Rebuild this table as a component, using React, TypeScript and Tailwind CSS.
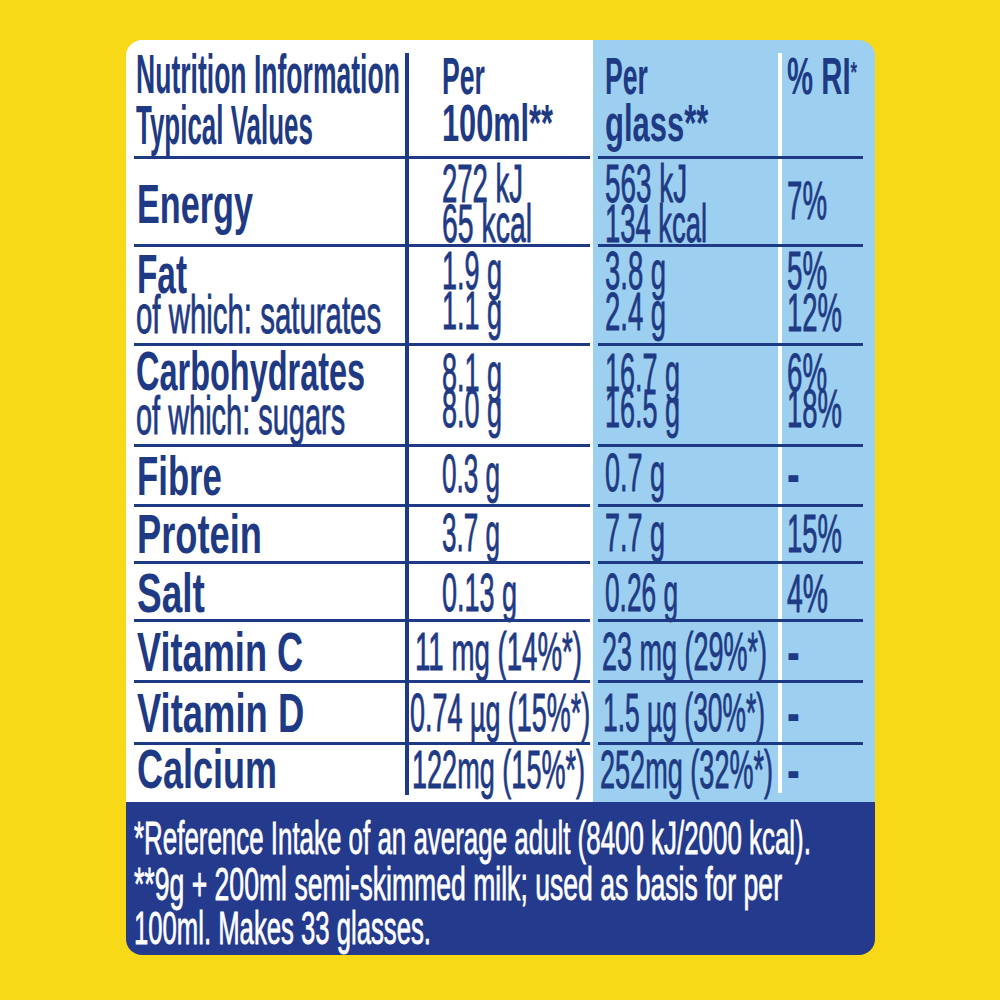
import React, { useLayoutEffect, useRef, useState } from "react";

const V = {
  lab: "text-[56px] leading-[41px] font-bold",
  val: "text-[54px] leading-[40px] font-normal [-webkit-text-stroke:0.9px_currentColor]",
  hdr: "text-[52px] leading-[38px] font-bold",
  foot: "text-[46px] leading-[34px] font-normal [-webkit-text-stroke:0.8px_currentColor]",
};

function Fit({ v, w, children }: { v: string; w: number; children: React.ReactNode }) {
  const ref = useRef<HTMLSpanElement>(null);
  const [s, setS] = useState(1);
  useLayoutEffect(() => {
    const m = () => {
      const el = ref.current;
      if (el && el.offsetWidth) setS(w / el.offsetWidth);
    };
    m();
    if (document.fonts) document.fonts.ready.then(m);
  }, [w]);
  return (
    <span
      ref={ref}
      className={`block shrink-0 whitespace-nowrap origin-left ${v}`}
      style={{ transform: `scaleX(${s})` }}
    >
      {children}
    </span>
  );
}

function Ln({ v, w, m = "", children }: { v: string; w: number; m?: string; children: React.ReactNode }) {
  return (
    <div className={`flex ${m}`}>
      <Fit v={v} w={w}>
        {children}
      </Fit>
    </div>
  );
}

type RowProps = {
  h: string;
  c1?: React.ReactNode;
  c3?: React.ReactNode;
  c4?: React.ReactNode;
  c6?: React.ReactNode;
  p1?: string;
  p3?: string;
  p4?: string;
  p6?: string;
  v2?: React.ReactNode;
  v5?: React.ReactNode;
};

function Row({ h, c1, c3, c4, c6, p1 = "pl-[11px]", p3 = "pl-[33px]", p4 = "pl-[12px]", p6 = "pl-[5px]", v2, v5 }: RowProps) {
  return (
    <div className={`grid grid-cols-[279px_4px_184px_185px_4px_93px] ${h}`}>
      <div className={`flex flex-col bg-white ${p1}`}>{c1}</div>
      {v2 ?? <div className="bg-[#1f3a84]" />}
      <div className={`flex flex-col bg-white ${p3}`}>{c3}</div>
      <div className={`flex flex-col bg-[#9dd0f0] ${p4}`}>{c4}</div>
      {v5 ?? <div className="bg-white" />}
      <div className={`flex flex-col bg-[#9dd0f0] ${p6}`}>{c6}</div>
    </div>
  );
}

function Sep() {
  return (
    <div className="grid h-[3px] grid-cols-[279px_4px_184px_185px_4px_93px]">
      <div className="bg-white">
        <div className="ml-[8px] h-full bg-[#1f3a84]" />
      </div>
      <div className="bg-[#1f3a84]" />
      <div className="bg-white">
        <div className="h-full w-[181px] bg-[#1f3a84]" />
      </div>
      <div className="bg-[#9dd0f0]">
        <div className="ml-[5px] h-full bg-[#1f3a84]" />
      </div>
      <div className="bg-[#1f3a84]" />
      <div className="bg-[#9dd0f0]">
        <div className="h-full w-[81px] bg-[#1f3a84]" />
      </div>
    </div>
  );
}

export default function App() {
  return (
    <div className="h-[1000px] w-[1000px] bg-[#f7d917] pl-[126px] pt-[40px] font-['Liberation_Sans',Arial,sans-serif] text-[#1f3a84]">
      <div className="flex h-[915px] w-[749px] flex-col overflow-hidden rounded-[16px]">
        {/* Header */}
        <Row
          h="h-[116px]"
          v2={
            <div className="flex flex-col bg-white">
              <div className="mt-[13px] flex-1 bg-[#1f3a84]" />
            </div>
          }
          v5={
            <div className="flex flex-col bg-[#9dd0f0]">
              <div className="mt-[13px] flex-1 bg-white" />
            </div>
          }
          p1="pl-[10px]"
          c1={
            <>
              <Ln v={V.lab} w={264} m="mt-[13px]">Nutrition Information</Ln>
              <Ln v={V.lab} w={177} m="mt-[10px]">Typical Values</Ln>
            </>
          }
          c3={
            <>
              <Ln v={V.hdr} w={43} m="mt-[17px]">Per</Ln>
              <Ln v={V.hdr} w={111} m="mt-[9px]">100ml**</Ln>
            </>
          }
          c4={
            <>
              <Ln v={V.hdr} w={43} m="mt-[17px]">Per</Ln>
              <Ln v={V.hdr} w={103} m="mt-[9px]">glass**</Ln>
            </>
          }
          c6={
            <Ln v={V.hdr} w={70} m="mt-[17px]">
              % RI<span className="align-top text-[30px] leading-[30px]">*</span>
            </Ln>
          }
        />
        <Sep />
        {/* Energy */}
        <Row
          h="h-[85px]"
          c1={<Ln v={V.lab} w={116} m="mt-[24px]">Energy</Ln>}
          c3={
            <>
              <Ln v={V.val} w={81} m="mt-[4px]">272 kJ</Ln>
              <Ln v={V.val} w={90}>65 kcal</Ln>
            </>
          }
          c4={
            <>
              <Ln v={V.val} w={82} m="mt-[4px]">563 kJ</Ln>
              <Ln v={V.val} w={102}>134 kcal</Ln>
            </>
          }
          c6={<Ln v={V.val} w={40} m="mt-[21px]">7%</Ln>}
        />
        <Sep />
        {/* Fat */}
        <Row
          h="h-[96px]"
          c1={
            <>
              <Ln v={V.lab} w={50} m="mt-[6px]">Fat</Ln>
              <Ln v={V.val} w={245} m="-ml-[1px]">of which: saturates</Ln>
            </>
          }
          c3={
            <>
              <Ln v={V.val} w={60} m="mt-[3px]">1.9 g</Ln>
              <Ln v={V.val} w={60}>1.1 g</Ln>
            </>
          }
          c4={
            <>
              <Ln v={V.val} w={61} m="mt-[3px]">3.8 g</Ln>
              <Ln v={V.val} w={61} m="mt-[1px]">2.4 g</Ln>
            </>
          }
          c6={
            <>
              <Ln v={V.val} w={40} m="mt-[3px]">5%</Ln>
              <Ln v={V.val} w={55} m="mt-[2px]">12%</Ln>
            </>
          }
        />
        <Sep />
        {/* Carbohydrates */}
        <Row
          h="h-[98px]"
          c1={
            <>
              <Ln v={V.lab} w={229} m="mt-[4px] -ml-[1px]">Carbohydrates</Ln>
              <Ln v={V.val} w={209} m="mt-[4px] -ml-[1px]">of which: sugars</Ln>
            </>
          }
          c3={
            <>
              <Ln v={V.val} w={60} m="mt-[6px]">8.1 g</Ln>
              <Ln v={V.val} w={60} m="-mt-[4px]">8.0 g</Ln>
            </>
          }
          c4={
            <>
              <Ln v={V.val} w={75} m="mt-[6px]">16.7 g</Ln>
              <Ln v={V.val} w={75} m="-mt-[4px]">16.5 g</Ln>
            </>
          }
          c6={
            <>
              <Ln v={V.val} w={40} m="mt-[6px]">6%</Ln>
              <Ln v={V.val} w={55} m="-mt-[4px]">18%</Ln>
            </>
          }
        />
        <Sep />
        {/* Fibre */}
        <Row
          h="h-[57px]"
          c1={<Ln v={V.lab} w={85} m="mt-[8px]">Fibre</Ln>}
          c3={<Ln v={V.val} w={58} m="mt-[6px]">0.3 g</Ln>}
          c4={<Ln v={V.val} w={60} m="mt-[5px]">0.7 g</Ln>}
          c6={<Ln v={V.lab} w={13} m="mt-[6px]">-</Ln>}
        />
        <Sep />
        {/* Protein */}
        <Row
          h="h-[54px]"
          c1={<Ln v={V.lab} w={125} m="mt-[6px]">Protein</Ln>}
          c3={<Ln v={V.val} w={58} m="mt-[5px]">3.7 g</Ln>}
          c4={<Ln v={V.val} w={60} m="mt-[5px]">7.7 g</Ln>}
          c6={<Ln v={V.val} w={55} m="mt-[6px]">15%</Ln>}
        />
        <Sep />
        {/* Salt */}
        <Row
          h="h-[55px]"
          c1={<Ln v={V.lab} w={68} m="mt-[8px]">Salt</Ln>}
          c3={<Ln v={V.val} w={75} m="mt-[8px]">0.13 g</Ln>}
          c4={<Ln v={V.val} w={73} m="mt-[8px]">0.26 g</Ln>}
          c6={<Ln v={V.val} w={41} m="mt-[9px]">4%</Ln>}
        />
        <Sep />
        {/* Vitamin C */}
        <Row
          h="h-[58px]"
          p3="pl-[6px]"
          p4="pl-[9px]"
          c1={<Ln v={V.lab} w={166} m="mt-[9px]">Vitamin C</Ln>}
          c3={<Ln v={V.val} w={167} m="mt-[9px]">11 mg (14%*)</Ln>}
          c4={<Ln v={V.val} w={165} m="mt-[9px]">23 mg (29%*)</Ln>}
          c6={<Ln v={V.lab} w={13} m="mt-[9px]">-</Ln>}
        />
        <Sep />
        {/* Vitamin D */}
        <Row
          h="h-[59px]"
          p3="pl-[1px]"
          p4="pl-[10px]"
          c1={<Ln v={V.lab} w={167} m="mt-[9px]">Vitamin D</Ln>}
          c3={<Ln v={V.val} w={180} m="mt-[9px]">0.74 µg (15%*)</Ln>}
          c4={<Ln v={V.val} w={162} m="mt-[9px]">1.5 µg (30%*)</Ln>}
          c6={<Ln v={V.lab} w={13} m="mt-[9px]">-</Ln>}
        />
        <Sep />
        {/* Calcium */}
        <Row
          h="h-[57px]"
          p3="pl-[3px]"
          p4="pl-[7px]"
          v2={
            <div className="bg-white">
              <div className="h-[50px] bg-[#1f3a84]" />
            </div>
          }
          v5={
            <div className="bg-[#9dd0f0]">
              <div className="h-[48px] bg-white" />
            </div>
          }
          c1={<Ln v={V.lab} w={140} m="mt-[3px]">Calcium</Ln>}
          c3={<Ln v={V.val} w={173} m="mt-[4px]">122mg (15%*)</Ln>}
          c4={<Ln v={V.val} w={173} m="mt-[4px]">252mg (32%*)</Ln>}
          c6={<Ln v={V.lab} w={13} m="mt-[4px]">-</Ln>}
        />
        {/* Footer */}
        <div className="flex h-[153px] flex-col bg-[#243a8c] pl-[8px] text-white">
          <Ln v={V.foot} w={677} m="mt-[19px]">*Reference Intake of an average adult (8400 kJ/2000 kcal).</Ln>
          <Ln v={V.foot} w={648} m="mt-[12px]">**9g + 200ml semi-skimmed milk; used as basis for per</Ln>
          <Ln v={V.foot} w={297} m="mt-[10px]">100ml. Makes 33 glasses.</Ln>
        </div>
      </div>
    </div>
  );
}
